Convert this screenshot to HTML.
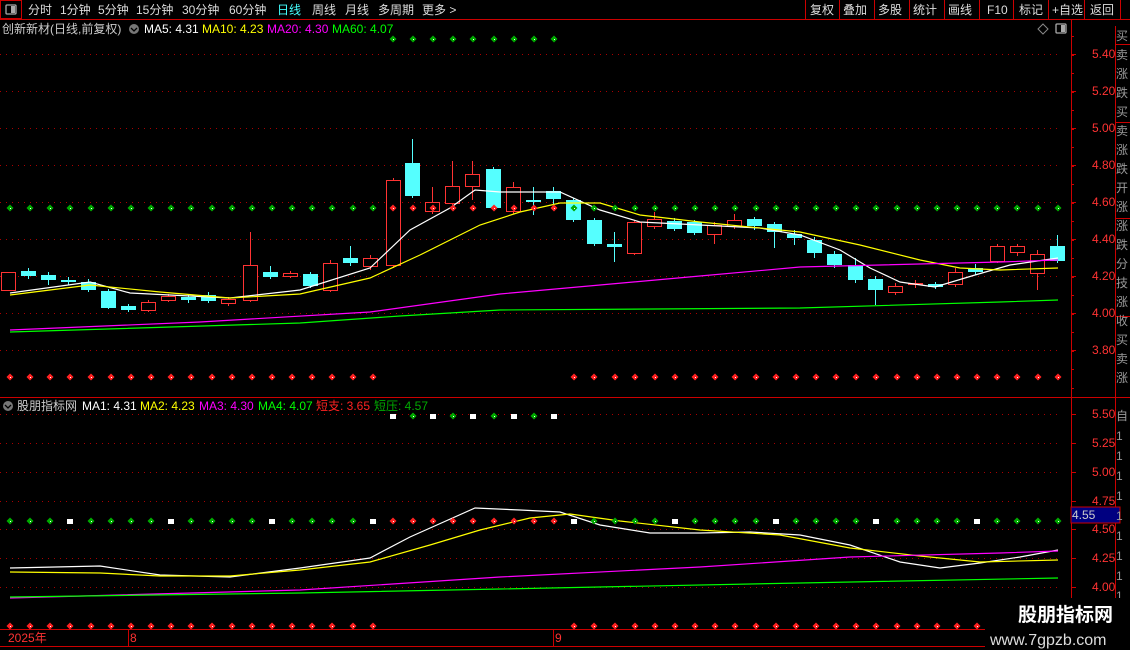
<!DOCTYPE html>
<html><head><meta charset="utf-8"><style>
body{margin:0;background:#000;width:1130px;height:650px;overflow:hidden;font-family:"Liberation Sans","Noto Sans CJK SC",sans-serif;}
svg{position:absolute;left:0;top:0}
</style></head><body>
<svg id="s" width="1130" height="650" xmlns="http://www.w3.org/2000/svg" font-family="Liberation Sans, Noto Sans CJK SC, sans-serif">
<rect width="1130" height="650" fill="#000"/>
<rect x="0.5" y="0.5" width="21" height="18" fill="none" stroke="#c00"/>
<rect x="6" y="5" width="10" height="9" rx="1" fill="none" stroke="#aaa" stroke-width="1.3"/><rect x="11" y="6" width="4" height="7" fill="#aaa"/>
<g font-size="12" fill="#ddd">
<text x="28" y="14">分时</text><text x="60" y="14">1分钟</text><text x="98" y="14">5分钟</text><text x="136" y="14">15分钟</text><text x="182" y="14">30分钟</text><text x="229" y="14">60分钟</text>
<text x="277" y="14" fill="#4ff">日线</text><text x="312" y="14">周线</text><text x="345" y="14">月线</text><text x="378" y="14">多周期</text><text x="422" y="14">更多 &gt;</text>
<text x="810" y="14">复权</text><text x="843" y="14">叠加</text><text x="878" y="14">多股</text><text x="913" y="14">统计</text><text x="948" y="14">画线</text><text x="987" y="14">F10</text><text x="1019" y="14">标记</text><text x="1052" y="14">+自选</text><text x="1090" y="14">返回</text>
</g>
<g stroke="#c00">
<line x1="0" y1="19.5" x2="1130" y2="19.5"/>
<line x1="805.5" y1="0" x2="805.5" y2="19"/><line x1="839.5" y1="0" x2="839.5" y2="19"/><line x1="874.5" y1="0" x2="874.5" y2="19"/><line x1="909.5" y1="0" x2="909.5" y2="19"/><line x1="944.5" y1="0" x2="944.5" y2="19"/><line x1="979.5" y1="0" x2="979.5" y2="19"/><line x1="1013.5" y1="0" x2="1013.5" y2="19"/><line x1="1048.5" y1="0" x2="1048.5" y2="19"/><line x1="1084.5" y1="0" x2="1084.5" y2="19"/><line x1="1120.5" y1="0" x2="1120.5" y2="19"/>
<line x1="1071.5" y1="19" x2="1071.5" y2="630"/>
<line x1="1115.5" y1="26" x2="1115.5" y2="630"/>
<line x1="0" y1="397.5" x2="1130" y2="397.5"/>
<line x1="0" y1="629.5" x2="1071" y2="629.5"/>
<line x1="0" y1="646.5" x2="1071" y2="646.5"/>
<line x1="128.5" y1="629" x2="128.5" y2="646"/><line x1="553.5" y1="629" x2="553.5" y2="646"/>
</g>
<g font-size="12">
<text x="2" y="33" fill="#ccc">创新新材(日线,前复权)</text>
<circle cx="134" cy="29" r="5" fill="#777"/><path d="M131 28l3 3 3-3" stroke="#000" fill="none" stroke-width="1.3"/>
<text x="144" y="33" fill="#fff">MA5: 4.31</text><text x="202" y="33" fill="#ff0">MA10: 4.23</text><text x="267" y="33" fill="#f0f">MA20: 4.30</text><text x="332" y="33" fill="#0f0">MA60: 4.07</text>
<circle cx="8" cy="406" r="5" fill="#777"/><path d="M5 405l3 3 3-3" stroke="#000" fill="none" stroke-width="1.3"/>
<text x="17" y="410" fill="#ccc">股朋指标网</text><text x="82" y="410" fill="#fff">MA1: 4.31</text><text x="140" y="410" fill="#ff0">MA2: 4.23</text><text x="199" y="410" fill="#f0f">MA3: 4.30</text><text x="258" y="410" fill="#0f0">MA4: 4.07</text><text x="316" y="410" fill="#f22">短支: 3.65</text><text x="374" y="410" fill="#0a0">短压: 4.57</text>
<text x="8" y="642" fill="#f33">2025年</text><text x="130" y="642" fill="#f33">8</text><text x="555" y="642" fill="#f33">9</text>
</g>
<path d="M1043 24l5 5-5 5-5-5z" fill="none" stroke="#888"/>
<rect x="1056" y="24" width="10" height="9" rx="1" fill="none" stroke="#aaa" stroke-width="1.3"/><rect x="1061" y="25" width="4" height="7" fill="#aaa"/>
<g id="g"></g>
<g font-size="12" fill="#f33" id="ax"></g>
<rect x="1071" y="507" width="49" height="16" fill="#000080" stroke="#c00"/>
<text x="1072" y="519" font-size="12" fill="#ccc">4.55</text>
<g font-size="12" fill="#999" id="rs"></g>
<rect x="985" y="598" width="145" height="52" fill="#000"/>
<text x="1018" y="621" font-size="19" font-weight="bold" fill="#fff">股朋指标网</text>
<text x="990" y="645" font-size="16" fill="#ddd">www.7gpzb.com</text>
</svg>
<script>
var NS="http://www.w3.org/2000/svg",g=document.getElementById('g');
function el(t,a,p){var e=document.createElementNS(NS,t);for(var k in a)e.setAttribute(k,a[k]);(p||g).appendChild(e);return e;}
[54,91,128,165,202,239,276,313,350].forEach(function(y){el('line',{x1:0,y1:y+.5,x2:1062,y2:y+.5,stroke:'#a00','stroke-dasharray':'1 5'});});
[414,443,472,501,529,558,587].forEach(function(y){el('line',{x1:0,y1:y+.5,x2:1062,y2:y+.5,stroke:'#a00','stroke-dasharray':'1 5'});});
var ax=document.getElementById('ax');
var lb=[[54,'5.40'],[91,'5.20'],[128,'5.00'],[165,'4.80'],[202,'4.60'],[239,'4.40'],[276,'4.20'],[313,'4.00'],[350,'3.80'],[414,'5.50'],[443,'5.25'],[472,'5.00'],[501,'4.75'],[529,'4.50'],[558,'4.25'],[587,'4.00']];
lb.forEach(function(l){var t=el('text',{x:1092,y:l[0]+4},ax);t.textContent=l[1];el('line',{x1:1071,y1:l[0]+.5,x2:1076,y2:l[0]+.5,stroke:'#c00'});});
for(var y=36;y<395;y+=18.5)el('line',{x1:1071,y1:Math.round(y)+.5,x2:1074,y2:Math.round(y)+.5,stroke:'#c00'});
var rs=document.getElementById('rs');
for(var i=0;i<19;i++){var t=el('text',{x:1116,y:40+i*19},rs);t.textContent="买卖涨跌买卖涨跌开涨涨跌分技涨收买卖涨"[i];}
[44,122,218,316].forEach(function(y){el('line',{x1:1115,y1:y+.5,x2:1130,y2:y+.5,stroke:'#c00'});});
for(var i=0;i<11;i++){var t=el('text',{x:1116,y:420+i*20},rs);t.textContent=i==0?"自":"1";}
var C=[[8,0,272,290,272,290],[28,1,271,276,268,279],[48,1,275,280,272,285],[68,1,280,282,277,285],[88,1,282,290,279,292],[108,1,291,308,289,309],[128,1,306,310,304,312],[148,0,302,310,300,312],[168,0,296,300,294,302],[188,1,297,300,295,303],[208,1,295,301,292,303],[228,0,299,303,297,306],[250,0,265,300,232,302],[270,1,272,277,266,279],[290,0,273,276,271,278],[310,1,274,286,272,288],[330,0,263,290,260,292],[350,1,258,263,246,266],[370,0,258,266,255,270],[393,0,180,265,178,268],[412,1,163,196,139,198],[432,0,202,211,187,214],[452,0,186,203,161,205],[472,0,174,186,161,200],[493,1,169,208,167,210],[513,0,187,211,182,214],[533,1,200,202,187,215],[553,1,191,199,187,204],[573,1,200,220,198,222],[594,1,220,244,218,246],[614,1,244,247,232,262],[634,0,222,253,220,255],[654,0,219,226,212,229],[674,1,221,229,218,231],[694,1,222,233,220,235],[714,0,225,234,222,244],[734,0,220,226,214,229],[754,1,219,226,217,230],[774,1,224,232,222,248],[794,1,234,238,230,245],[814,1,240,253,237,258],[834,1,254,265,251,268],[855,1,265,280,258,283],[875,1,279,290,276,305],[895,0,286,292,283,295],[915,0,283,284,280,288],[935,1,284,287,282,289],[955,0,272,284,268,287],[975,1,268,272,264,275],[997,0,246,261,244,263],[1017,0,246,252,244,256],[1037,0,254,273,250,290],[1057,1,246,261,235,263]];
C.forEach(function(c){var col=c[1]?'#5ff':'#f33';
el('line',{x1:c[0]+.5,y1:c[4],x2:c[0]+.5,y2:c[5],stroke:col});
if(c[1])el('rect',{x:c[0]-7,y:c[2],width:15,height:Math.max(2,c[3]-c[2]),fill:col});
else el('rect',{x:c[0]-6.5,y:c[2]+.5,width:14,height:Math.max(1,c[3]-c[2]),fill:'#000',stroke:col});});
function pl(p,c){el('polyline',{points:p,fill:'none',stroke:c,'stroke-width':1.2});}
pl("10,293 90,282 130,293 230,298 300,290 370,268 410,230 450,208 475,190 500,192 560,192 600,210 640,222 700,225 760,228 800,235 840,250 870,268 900,282 935,287 975,275 1010,265 1058,258",'#fff');
pl("10,295 90,285 160,292 230,298 300,294 370,278 420,255 480,225 520,212 560,203 600,203 640,215 700,222 800,232 860,245 920,260 960,268 1000,270 1058,268",'#ff0');
pl("10,330 200,322 370,312 500,294 600,285 700,276 800,267 1000,262 1058,260",'#f0f');
pl("10,332 300,323 400,316 500,310 800,308 1000,302 1058,300",'#0f0');
pl("10,568 100,566 160,575 230,577 300,568 370,558 410,537 475,508 520,510 560,512 600,525 650,533 700,533 750,532 800,535 850,545 900,562 940,568 980,563 1020,557 1058,550",'#fff');
pl("10,572 100,573 160,576 230,576 300,570 370,562 430,545 480,530 530,518 570,514 620,521 700,530 780,535 850,548 920,556 980,562 1058,560",'#ff0');
pl("10,598 300,590 500,577 700,567 850,557 1000,553 1058,551",'#f0f');
pl("10,597 300,593 500,589 800,583 1058,578",'#0f0');
function dm(x,y,c){el('path',{d:'M'+x+' '+(y-3.5)+'l3.5 3.5-3.5 3.5-3.5-3.5z',fill:c});el('rect',{x:x,y:y,width:1,height:1,fill:'#fff'});}
function sq(x,y){el('rect',{x:x-3,y:y-2,width:6,height:5,fill:'#fff'});}
for(var i=0;i<53;i++){var x=Math.round(10+20.15*i);
 if(i>=19&&i<=27){dm(x,208,'#f22');dm(x,521,'#f22');}else{dm(x,208,'#0a0');if((i*7)%5==1)sq(x,521);else dm(x,521,'#0a0');}
 if(i<19||i>=28){dm(x,377,'#f22');dm(x,626,'#f22');}
 if(i>=19&&i<=27){dm(x,39,'#0a0');if(i%2)sq(x,416);else dm(x,416,'#0a0');}
}
</script>
</body></html>
